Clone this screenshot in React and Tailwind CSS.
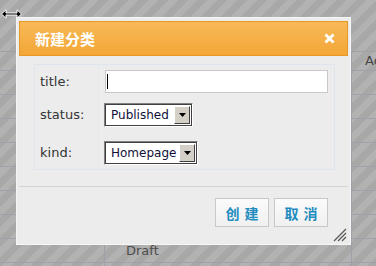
export default function App() {
  const rows = Array.from({ length: 9 });
  return (
    <div className="relative w-[376px] h-[266px] overflow-hidden bg-[#acacac] bg-[image:repeating-linear-gradient(135deg,#a8a8a8_0px,#a8a8a8_7px,#b2b2b2_7px,#b2b2b2_14px)] font-['DejaVu_Sans',sans-serif]">
      {/* background table */}
      <div className="flex flex-col">
        <div className="h-[52px] border-b border-[#9ea2a8]" />
        <div className="grid grid-cols-[105px_247px_1fr] h-[19px] border-b border-[#9ea2a8]">
          <div className="border-r border-[#9ea2a8]" />
          <div className="border-r border-[#9ea2a8]" />
          <div className="pl-[13px] text-[13px] leading-[18px] text-[#454545] whitespace-nowrap overflow-hidden">Ac</div>
        </div>
        {rows.map((_, i) => (
          <div key={i} className="grid grid-cols-[105px_247px_1fr] h-[24px] border-b border-[#9ea2a8]">
            <div className="border-r border-[#9ea2a8]" />
            <div className="border-r border-[#9ea2a8] pl-[21px] text-[13px] leading-[23px] text-[#4e4e4e]">
              {i === 7 ? "Draft" : ""}
            </div>
            <div />
          </div>
        ))}
      </div>

      {/* cursor */}
      <svg className="absolute left-[1px] top-[9px]" width="21" height="10" viewBox="0 0 21 10">
        <polygon
          points="0.5,5 5,0.8 5,4 16,4 16,0.8 20.5,5 16,9.2 16,6 5,6 5,9.2"
          fill="#000"
          stroke="#fff"
          strokeWidth="1"
          strokeLinejoin="miter"
        />
      </svg>

      {/* dialog */}
      <div className="absolute left-[16px] top-[17px] w-[335px] h-[228px] bg-[#ececec] border border-[#f6f6f6] pt-[3px] px-[2px] flex flex-col">
        <div className="h-[35px] bg-gradient-to-b from-[#f8b957] to-[#f3a735] border border-[#e8982a] flex items-center justify-between pl-[15px] pr-[12px]">
          <span className="font-['Noto_Sans_CJK_SC',sans-serif] font-bold text-[15px] leading-none text-white">新建分类</span>
          <svg width="11" height="11" viewBox="0 0 11 11">
            <path d="M1.5 1.5 L9.5 9.5 M9.5 1.5 L1.5 9.5" stroke="#fff" strokeWidth="2.8" strokeLinecap="butt" />
          </svg>
        </div>

        <div className="mt-[8px] ml-[15px] w-[301px] border border-[#dfe5ec] grid grid-cols-[64px_1fr] grid-rows-[33px_33px_38px]">
          <div className="border-r border-[#e4e9ef] flex items-center pl-[5px] text-[13px] text-[#333]">title:</div>
          <div className="flex items-center pl-[6px]">
            <div className="w-[223px] h-[23px] bg-white border border-[#c9c9c9] flex items-center pl-[1px]">
              <div className="w-[1px] h-[15px] bg-black" />
            </div>
          </div>

          <div className="border-r border-[#e4e9ef] flex items-center pl-[5px] text-[13px] text-[#333]">status:</div>
          <div className="flex items-center pl-[5px]">
            <Select label="Published" width="w-[89px]" />
          </div>

          <div className="border-r border-[#e4e9ef] flex items-start pt-[10px] pl-[5px]">
            <div className="h-[23px] flex items-center text-[13px] text-[#333]">kind:</div>
          </div>
          <div className="flex items-start pt-[10px] pl-[5px]">
            <Select label="Homepage" width="w-[94px]" />
          </div>
        </div>

        <div className="mt-[16px] h-[1px] bg-[#d4d4d4]" />

        <div className="mt-[11px] flex justify-end gap-[5px] pr-[20px]">
          <Button a="创" b="建" />
          <Button a="取" b="消" />
        </div>

        <svg className="absolute right-[3px] bottom-[2px]" width="14" height="14" viewBox="0 0 14 14">
          <path d="M1 13 L13 1 M5 13 L13 5 M9 13 L13 9" stroke="#555" strokeWidth="1.2" />
        </svg>
      </div>
    </div>
  );
}

function Select({ label, width }) {
  return (
    <div className={`${width} h-[24px] border border-[#808080] border-r-white border-b-white`}>
      <div className="w-full h-full border border-[#404040] bg-white flex items-center justify-between pl-[5px] pr-[1px]">
        <span className="text-[12px] leading-none text-[#10103a] whitespace-nowrap">{label}</span>
        <div className="w-[16px] h-[18px] bg-[#d4d0c8] border border-white border-r-[#404040] border-b-[#404040] flex items-center justify-center">
          <svg width="7" height="4" viewBox="0 0 7 4">
            <polygon points="0,0 7,0 3.5,4" fill="#000" />
          </svg>
        </div>
      </div>
    </div>
  );
}

function Button({ a, b }) {
  return (
    <div className="w-[54px] h-[29px] border border-[#c8c8c8] bg-gradient-to-b from-[#fbfbfb] to-[#f0f0f0] flex items-center justify-center gap-[5px] font-['Noto_Sans_CJK_SC',sans-serif] font-bold text-[14px] leading-none text-[#1f8cc0]">
      <span>{a}</span>
      <span>{b}</span>
    </div>
  );
}
